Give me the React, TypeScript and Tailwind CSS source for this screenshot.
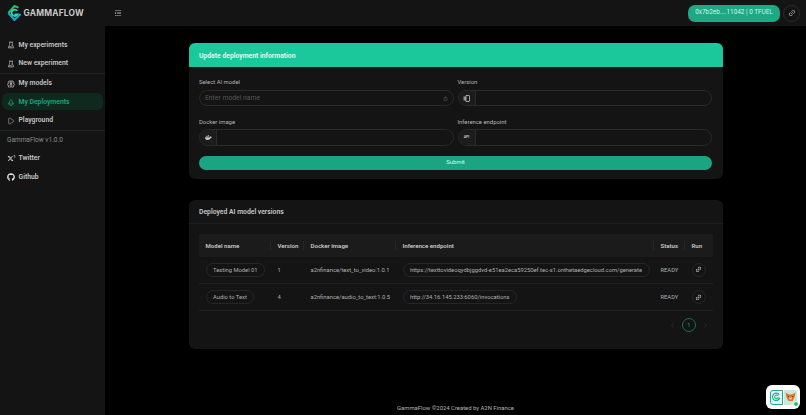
import React from 'react';
import { ChevronLeft, ChevronRight, Play } from 'lucide-react';
import {
  AiOutlineClear,
  AiOutlineExperiment,
  AiOutlineLink,
  AiOutlineMenuUnfold,
  AiOutlineRocket,
} from 'react-icons/ai';
import { FaDocker, FaGithub } from 'react-icons/fa';
import { LuBrain } from 'react-icons/lu';
import { RiTwitterXFill } from 'react-icons/ri';

const rows = [
  {
    name: 'Testing Model 01',
    version: '1',
    image: 'a2nfinance/text_to_video:1.0.1',
    endpoint: 'https://texttovideoqydbjggdvd-e51ea2eca59250ef.tec-s1.onthetaedgecloud.com/generate',
  },
  {
    name: 'Audio to Text',
    version: '4',
    image: 'a2nfinance/audio_to_text:1.0.5',
    endpoint: 'http://34.16.145.233:6060/invocations',
  },
];

function Logo() {
  return (
    <svg width="15" height="16" viewBox="0 0 15 16" fill="none" className="shrink-0">
      <path d="M11.5 2.6 7.5 1 1.4 8" stroke="#22c55e" strokeWidth="2" />
      <path d="M1.4 8l6 7 6.2-6" stroke="#1aa6c9" strokeWidth="2" />
      <path d="M10.3 5.8A3.2 3.2 0 1 0 10.6 9.4H7.4" stroke="#2dd4bf" strokeWidth="1.8" />
    </svg>
  );
}

function NavItem({ icon, label, active }: { icon: React.ReactNode; label: string; active?: boolean }) {
  return (
    <div
      className={`flex h-[17px] items-center gap-[3.5px] rounded-[6px] pl-[5px] pt-[1px] text-[6.8px] font-semibold ${
        active ? 'bg-[#10291f] text-[#17a67f]' : 'text-[#c4c4c4]'
      }`}
    >
      <span className="flex w-[8px] justify-center">{icon}</span>
      {label}
    </div>
  );
}

function Label({ children }: { children: React.ReactNode }) {
  return <div className="mb-[3.4px] h-[9px] pt-[1px] text-[5.9px] leading-[9px] text-[#b5b5b5]">{children}</div>;
}

function Field({ label, icon }: { label: string; icon: React.ReactNode }) {
  return (
    <div>
      <Label>{label}</Label>
      <div className="flex h-[16.7px] overflow-hidden rounded-full border border-[#2a2a2a]">
        <span className="flex w-[17px] items-center justify-center border-r border-[#2a2a2a] bg-[#1c1c1c] text-[#c8c8c8]">{icon}</span>
      </div>
    </div>
  );
}

function Pill({ children }: { children: React.ReactNode }) {
  return (
    <span className="inline-block h-[14px] whitespace-nowrap rounded-full border border-[#262626] px-[6.5px] text-[5.8px] leading-[12px] text-[#b0b0b0]">
      {children}
    </span>
  );
}

function Head({ children, line = true }: { children: React.ReactNode; line?: boolean }) {
  return (
    <th className="relative px-[7px] text-left text-[6.1px] font-semibold text-[#c8c8c8]">
      {children}
      {line && <span className="absolute right-0 top-[7px] h-[9px] w-px bg-[#262626]" />}
    </th>
  );
}

export default function App() {
  return (
    <div className="flex h-[415px] w-[806px] flex-col overflow-hidden bg-black font-['Roboto',sans-serif]">
      <header className="flex h-[26px] shrink-0 items-center bg-[#141414]">
        <div className="flex w-[105px] items-center gap-[2px] pl-[6.5px] font-['Inter',sans-serif]">
          <Logo />
          <span className="text-[8.4px] font-bold tracking-[0.2px] text-[#c9c9c9]">GAMMAFLOW</span>
        </div>
        <AiOutlineMenuUnfold size={8} className="ml-[9px] text-[#bdbdbd]" />
        <div className="ml-auto flex items-center gap-[3px] pr-[6px]">
          <div className="flex h-[17px] w-[92px] items-center justify-center rounded-[7px] bg-[#1fa884] text-[6.4px] text-[#d6f5ec]">
            0x7b2eb....11042 | 0 TFUEL
          </div>
          <div className="flex h-[17px] w-[17px] items-center justify-center rounded-full border border-[#2a2a2a] text-[#c8c8c8]">
            <AiOutlineLink size={8} />
          </div>
        </div>
      </header>
      <div className="flex min-h-0 flex-1">
        <aside className="flex w-[105px] shrink-0 flex-col bg-[#141414] px-[2px] pt-[10px]">
          <div className="flex flex-col gap-[1.5px]">
            <NavItem icon={<AiOutlineExperiment size={8} />} label="My experiments" />
            <NavItem icon={<AiOutlineExperiment size={8} />} label="New experiment" />
          </div>
          <div className="-mx-[2px] my-[1px] h-px bg-[#222222]" />
          <div className="flex flex-col gap-[1.5px]">
            <NavItem icon={<LuBrain size={8} />} label="My models" />
            <NavItem active icon={<AiOutlineRocket size={9} />} label="My Deployments" />
            <NavItem icon={<Play size={8} strokeWidth={1.5} />} label="Playground" />
          </div>
          <div className="-mx-[2px] my-[1px] h-px bg-[#222222]" />
          <div className="flex h-[17px] items-center pl-[5px] pt-[1px] text-[6.5px] text-[#8c8c8c]">GammaFlow v1.0.0</div>
          <div className="mt-[1px] flex flex-col gap-[1.5px]">
            <NavItem icon={<span className="flex items-start text-[#e5e5e5]"><RiTwitterXFill size={7} className="shrink-0" /><span className="text-[3.5px] leading-[4px]">1</span></span>} label="Twitter" />
            <NavItem icon={<FaGithub size={8} className="text-[#e5e5e5]" />} label="Github" />
          </div>
        </aside>
        <main className="flex min-w-0 flex-1 flex-col items-center pt-[17.3px]">
          <section className="h-[136px] w-[534px] overflow-hidden rounded-[6px] bg-[#141414]">
            <div className="flex h-[24px] items-center bg-[#1bc89c] px-[10.5px] pt-[1.5px] text-[6.8px] font-semibold text-[#e8fbf5]">
              Update deployment information
            </div>
            <div className="px-[10.5px] pt-[10px]">
              <div className="grid grid-cols-2 gap-x-[4px] gap-y-[10.5px]">
                <div>
                  <Label>Select AI model</Label>
                  <div className="flex h-[16.7px] items-center justify-between rounded-full border border-[#2a2a2a] px-[5px] text-[6.8px] text-[#565656]">
                    Enter model name
                    <AiOutlineClear size={5} />
                  </div>
                </div>
                <Field
                  label="Version"
                  icon={
                    <svg width="7" height="7" viewBox="0 0 14 14" fill="none">
                      <path d="M1 3h5v8H1z" fill="#8f8f8f" />
                      <path d="M6 1h6a1 1 0 0 1 1 1v10a1 1 0 0 1-1 1H6z" stroke="#c8c8c8" strokeWidth="1.5" />
                    </svg>
                  }
                />
                <Field label="Docker image" icon={<FaDocker size={7} />} />
                <Field label="Inference endpoint" icon={<span className="text-[3.5px] font-bold">API</span>} />
              </div>
              <div className="mt-[10px] flex h-[13.6px] items-center justify-center rounded-full bg-[#1aa582] text-[5.9px] text-[#dff5ee]">
                Submit
              </div>
            </div>
          </section>
          <section className="mt-[20.4px] h-[149px] w-[534px] rounded-[6px] bg-[#141414]">
            <div className="flex h-[24.5px] items-center border-b border-[#1c1c1c] px-[10.5px] pt-[1.5px] text-[6.8px] font-semibold text-[#c8c8c8]">
              Deployed AI model versions
            </div>
            <div className="px-[10px] pt-[9.5px]">
              <table className="w-full table-fixed border-collapse">
                <colgroup>
                  <col className="w-[72px]" />
                  <col className="w-[33px]" />
                  <col className="w-[92px]" />
                  <col className="w-[258px]" />
                  <col className="w-[31px]" />
                  <col />
                </colgroup>
                <thead>
                  <tr className="h-[23px] bg-[#1b1b1b]">
                    <Head>Model name</Head>
                    <Head>Version</Head>
                    <Head>Docker image</Head>
                    <Head>Inference endpoint</Head>
                    <Head>Status</Head>
                    <Head line={false}>Run</Head>
                  </tr>
                </thead>
                <tbody>
                  {rows.map(row => (
                    <tr key={row.name} className="h-[27px] border-b border-[#202020] text-[5.8px] text-[#b0b0b0]">
                      <td className="px-[7px]"><Pill>{row.name}</Pill></td>
                      <td className="px-[7px] pt-[1px]">{row.version}</td>
                      <td className="whitespace-nowrap px-[7px] pt-[1px]">{row.image}</td>
                      <td className="px-[7px]"><Pill>{row.endpoint}</Pill></td>
                      <td className="px-[7px] pt-[1px]">READY</td>
                      <td className="px-[7px]">
                        <span className="flex h-[14px] w-[14px] items-center justify-center rounded-full border border-[#262626] text-[#d8d8d8]">
                          <AiOutlineLink size={7} />
                        </span>
                      </td>
                    </tr>
                  ))}
                </tbody>
              </table>
              <div className="mt-[7px] flex items-center justify-end gap-[6px] pr-[3.5px] text-[#3d3d3d]">
                <ChevronLeft size={7} />
                <span className="flex h-[14px] w-[14px] items-center justify-center rounded-full border border-[#13705a] text-[5.9px] text-[#1aa582]">1</span>
                <ChevronRight size={7} />
              </div>
            </div>
          </section>
          <footer className="mt-auto flex h-[14px] items-center text-[5.9px] text-[#b5b5b5]">
            GammaFlow ©2024 Created by A2N Finance
          </footer>
        </main>
      </div>
      <div className="absolute left-[766px] top-[385px] flex h-[24px] w-[34px] items-center justify-center gap-px rounded-[6px] bg-white">
        <span className="flex h-[15px] w-[13px] items-center justify-center rounded-l-[3px] border border-[#2aa58a] bg-[#e9f5f2]">
          <svg width="9" height="10" viewBox="0 0 16 16" fill="none">
            <path d="M13 4A6.6 6.6 0 1 0 14 9" stroke="#1aa6c9" strokeWidth="2" />
            <path d="M11 6A3.4 3.4 0 1 0 11 10H8" stroke="#22c55e" strokeWidth="2" />
          </svg>
        </span>
        <span className="relative flex h-[15px] w-[13px] items-center justify-center rounded-r-[3px] bg-[#c9e6df]">
          <svg width="11" height="10" viewBox="0 0 22 20">
            <polygon points="1,1 8,5 14,5 21,1 19,11 15,18 7,18 3,11" fill="#e2761b" />
            <polygon points="8,10 11,12 14,10 13,15 9,15" fill="#f6c9a0" />
            <polygon points="5,8 8,8 8,10" fill="#333333" />
            <polygon points="17,8 14,8 14,10" fill="#333333" />
          </svg>
          <span className="absolute -bottom-[2px] -right-[2px] h-[6px] w-[6px] rounded-full border border-white bg-[#22c55e]" />
        </span>
      </div>
    </div>
  );
}
